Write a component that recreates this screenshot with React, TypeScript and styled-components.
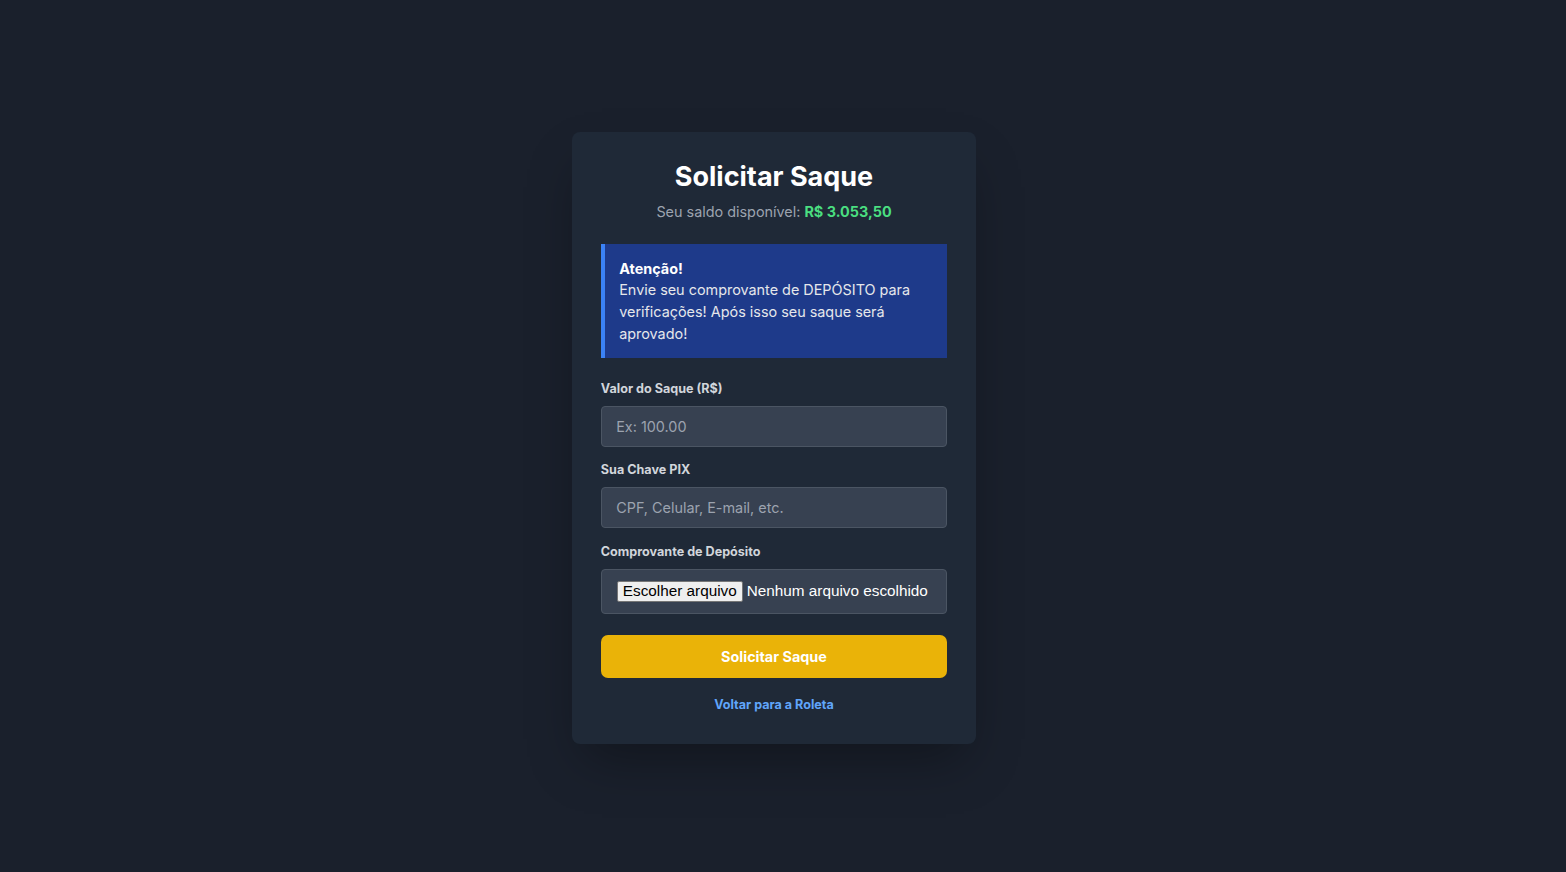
import React from "react";
import styled, { createGlobalStyle } from "styled-components";

const Global = createGlobalStyle`
  html { font-size: 14.4px; }
  html, body { margin: 0; padding: 0; background: #1a202c; }
  body { font-family: Inter, "Noto Sans", sans-serif; color: #fff; }
  * { box-sizing: border-box; }
`;

const Page = styled.div`
  min-height: 100vh;
  display: flex;
  align-items: center;
  justify-content: center;
  padding: 4px 18px 0 0;
`;

const Card = styled.div`
  width: 404px;
  background: #1f2937;
  border-radius: 8px;
  padding: 28.8px 28.8px 29.5px;
  box-shadow: 0 25px 50px -12px rgba(0, 0, 0, 0.35);
  display: flex;
  flex-direction: column;
`;

const Title = styled.h1`
  margin: 0;
  text-align: center;
  font-size: 27px;
  line-height: 32.4px;
  font-weight: 700;
  color: #fff;
`;

const Balance = styled.p`
  margin: 7.2px 0 0;
  text-align: center;
  font-size: 14.4px;
  line-height: 21.6px;
  color: #9ca3af;
`;

const Amount = styled.span`
  color: #4ade80;
  font-weight: 700;
`;

const Alert = styled.div`
  margin-top: 21.6px;
  background: #1e3a8a;
  border-left: 4px solid #3b82f6;
  padding: 14px 14.4px;
  font-size: 14.4px;
  line-height: 21.6px;
  color: #e5e7eb;
`;

const AlertTitle = styled.strong`
  display: block;
  font-weight: 700;
  color: #fff;
`;

const Field = styled.div<{ $top: number }>`
  display: flex;
  flex-direction: column;
  margin-top: ${(p) => p.$top}px;
`;

const Label = styled.label`
  font-size: 12.6px;
  line-height: 18px;
  font-weight: 700;
  color: #d1d5db;
  margin-bottom: 8px;
`;

const Input = styled.input`
  height: 41px;
  width: 100%;
  background: #374151;
  border: 1px solid #4b5563;
  border-radius: 4px;
  padding: 0 14.4px;
  font-family: Inter, "Noto Sans", sans-serif;
  font-size: 14.4px;
  color: #fff;
  outline: none;
  &::placeholder { color: #9ca3af; }
`;

const FileBox = styled.div`
  height: 45px;
  background: #374151;
  border: 1px solid #4b5563;
  border-radius: 4px;
  padding: 0 15px;
  display: flex;
  align-items: center;
  gap: 4px;
  font-family: "Liberation Sans", Arial, sans-serif;
  font-size: 15.3px;
`;

const FileButton = styled.span`
  display: inline-flex;
  align-items: center;
  height: 21px;
  padding: 0 5px;
  background: #efefef;
  border: 1px solid #767676;
  border-radius: 2px;
  color: #000;
`;

const FileText = styled.span`
  color: #fff;
`;

const Submit = styled.button`
  margin-top: 21.6px;
  height: 43px;
  width: 100%;
  border: none;
  border-radius: 7px;
  background: #eab308;
  color: #fff;
  font-family: Inter, "Noto Sans", sans-serif;
  font-size: 14.4px;
  font-weight: 700;
  cursor: pointer;
`;

const BackLink = styled.a`
  margin-top: 18px;
  align-self: center;
  font-size: 12.6px;
  line-height: 18px;
  font-weight: 700;
  color: #60a5fa;
  text-decoration: none;
`;

export default function App() {
  return (
    <>
      <Global />
      <Page>
        <Card>
          <Title>Solicitar Saque</Title>
          <Balance>
            Seu saldo disponível: <Amount>R$ 3.053,50</Amount>
          </Balance>
          <Alert>
            <AlertTitle>Atenção!</AlertTitle>
            Envie seu comprovante de DEPÓSITO para verificações! Após isso seu saque será aprovado!
          </Alert>
          <Field $top={21.6}>
            <Label>Valor do Saque (R$)</Label>
            <Input placeholder="Ex: 100.00" />
          </Field>
          <Field $top={14.4}>
            <Label>Sua Chave PIX</Label>
            <Input placeholder="CPF, Celular, E-mail, etc." />
          </Field>
          <Field $top={14.4}>
            <Label>Comprovante de Depósito</Label>
            <FileBox>
              <FileButton>Escolher arquivo</FileButton>
              <FileText>Nenhum arquivo escolhido</FileText>
            </FileBox>
          </Field>
          <Submit>Solicitar Saque</Submit>
          <BackLink href="#">Voltar para a Roleta</BackLink>
        </Card>
      </Page>
    </>
  );
}
